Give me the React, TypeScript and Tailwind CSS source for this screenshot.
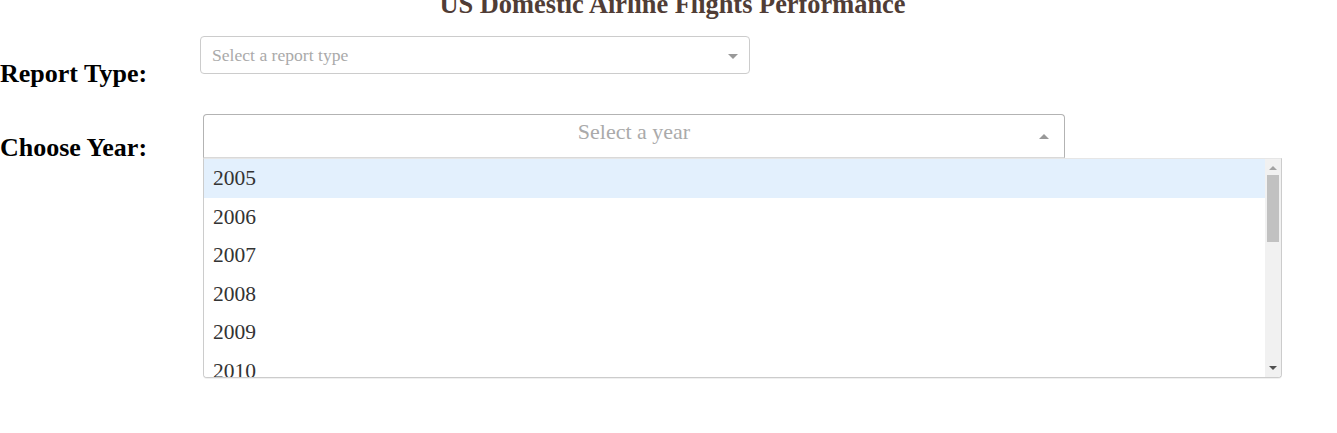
const years = ['2005', '2006', '2007', '2008', '2009', '2010']

function Caret({ up = false, color = '#999' }: { up?: boolean; color?: string }) {
  return (
    <svg width="10" height="5" viewBox="0 0 10 5" className="block">
      <path d={up ? 'M0 5 L5 0 L10 5 Z' : 'M0 0 L10 0 L5 5 Z'} fill={color} />
    </svg>
  )
}

function ReportDropdown() {
  return (
    <div className="relative flex h-[38px] w-[550px] items-center rounded-[4px] border border-[#cccccc] bg-white pl-[11px]">
      <span className="mt-[1px] text-[17.6px] leading-none text-[#aaaaaa]">Select a report type</span>
      <div className="absolute right-[11px] top-[17px]">
        <Caret />
      </div>
    </div>
  )
}

function FakeScrollbar() {
  return (
    <div className="flex w-[16px] shrink-0 flex-col items-center bg-[#f1f1f1]">
      <div className="flex h-[16px] items-center justify-center pt-[2px]">
        <svg width="8" height="4" viewBox="0 0 8 4">
          <path d="M0 4 L4 0 L8 4 Z" fill="#a3a3a3" />
        </svg>
      </div>
      <div className="h-[67px] w-[12px] bg-[#c1c1c1]" />
      <div className="flex-1" />
      <div className="flex h-[16px] items-center justify-center pb-[2px]">
        <svg width="8" height="4" viewBox="0 0 8 4">
          <path d="M0 0 L8 0 L4 4 Z" fill="#505050" />
        </svg>
      </div>
    </div>
  )
}

function YearDropdown() {
  return (
    <div className="relative">
      <div className="relative flex h-[44px] w-[862px] items-center justify-center rounded-t-[4px] border border-[#b3b3b3] border-b-[#d9d9d9] bg-white">
        <span className="-mt-[9px] text-[22px] leading-none text-[#aaaaaa]">Select a year</span>
        <div className="absolute right-[15px] top-[19px]">
          <Caret up />
        </div>
      </div>
      <div className="absolute left-0 top-[44px] z-10 flex h-[220px] w-[1079px] overflow-hidden rounded-b-[4px] border border-[#cccccc] border-t-[#e6e6e6] bg-white shadow-[0_1px_0_rgba(0,0,0,0.06)]">
        <div className="flex-1 overflow-hidden">
          {years.map((y, i) => (
            <div
              key={y}
              className={`h-[38.6px] pl-[9px] text-[21.5px] leading-[38.6px] text-[#333333] ${
                i === 0 ? 'bg-[#e3f0fd]' : 'bg-white'
              }`}
            >
              {y}
            </div>
          ))}
        </div>
        <FakeScrollbar />
      </div>
    </div>
  )
}

export default function App() {
  return (
    <div className="h-[433px] overflow-hidden bg-white font-['Liberation_Serif','Times_New_Roman',serif]">
      <h1 className="-mt-[11px] pl-[8px] text-center text-[26.4px] font-bold leading-[30px] text-[#503D36]">
        US Domestic Airline Flights Performance
      </h1>

      <div className="mt-[17px] flex items-start">
        <h2 className="mt-[23px] w-[200px] shrink-0 text-[26px] font-bold leading-[30px] text-black">
          Report Type:
        </h2>
        <ReportDropdown />
      </div>

      <div className="mt-[25px] flex items-start">
        <h2 className="mt-[19px] w-[203px] shrink-0 text-[26px] font-bold leading-[30px] text-black">
          Choose Year:
        </h2>
        <YearDropdown />
      </div>
    </div>
  )
}
